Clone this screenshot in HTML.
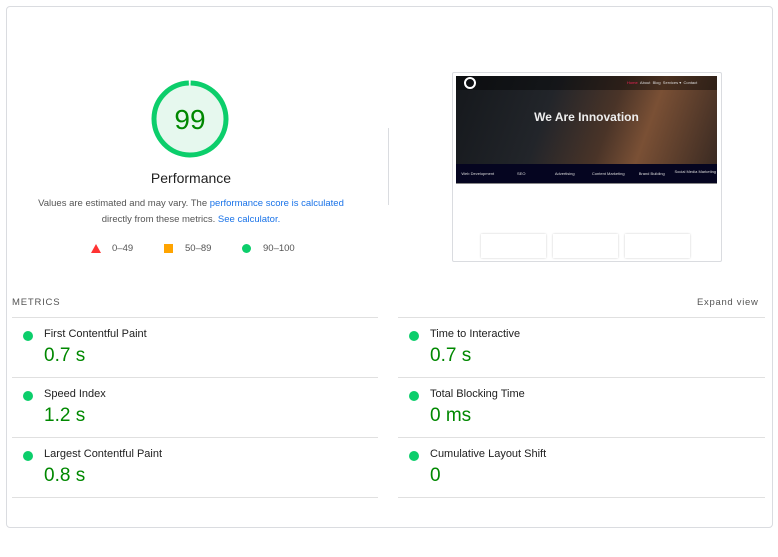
<!DOCTYPE html><html><head><style>
body{margin:0;width:778px;height:504px;background:#fff;font-family:"Liberation Sans",sans-serif;overflow:hidden;position:relative}
.card{position:absolute;left:6px;top:6px;width:765px;height:520px;border:1px solid #dadce0;border-radius:4px}
.a{position:absolute}
.link{color:#1a73e8}
.col{position:absolute;width:366px}
.row{height:59px;border-top:1px solid #e0e0e0;position:relative}
.dot{position:absolute;left:11px;top:13px;width:10px;height:10px;border-radius:50%;background:#0cce6b}
.t{position:absolute;left:32px;top:10px;font-size:11px;color:#212121}
.v{position:absolute;left:32px;top:27px;font-size:19px;color:#008800}
</style></head><body>
<div class="card"></div>
<svg class="a" style="left:149px;top:78px" width="82" height="82"><circle cx="41" cy="41" r="36" fill="#e6f8ee" stroke="#0cce6b" stroke-width="5" stroke-dasharray="224 2.2" transform="rotate(-89 41 41)"/><text x="41" y="51" text-anchor="middle" font-size="28" fill="#008800" font-family="Liberation Sans">99</text></svg>
<div class="a" style="left:0;width:382px;top:170px;text-align:center;font-size:14px;color:#212121">Performance</div>
<div class="a" style="left:0;width:382px;top:196px;text-align:center;font-size:9.5px;color:#555;line-height:16px">Values are estimated and may vary. The <span class="link">performance score is calculated</span><br>directly from these metrics. <span class="link">See calculator.</span></div>
<svg class="a" style="left:91px;top:244px" width="10" height="9"><polygon points="5,0 10,9 0,9" fill="#f33"/></svg>
<div class="a" style="left:112px;top:243px;font-size:9.5px;color:#555">0–49</div>
<div class="a" style="left:164px;top:244px;width:9px;height:9px;background:#ffa400"></div>
<div class="a" style="left:185px;top:243px;font-size:9.5px;color:#555">50–89</div>
<div class="a" style="left:242px;top:244px;width:9px;height:9px;border-radius:50%;background:#0cce6b"></div>
<div class="a" style="left:263px;top:243px;font-size:9.5px;color:#555">90–100</div>
<div class="a" style="left:388px;top:128px;width:1px;height:77px;background:#dadce0"></div>
<div class="a" style="left:452px;top:72px;width:268px;height:188px;border:1px solid #dadce0;border-radius:2px;background:#fff"></div>
<div class="a" style="left:456px;top:76px;width:261px;height:88px;background:linear-gradient(110deg,#15181c 0%,#22252a 35%,#4a3428 58%,#7a5035 72%,#3a2a22 100%)"></div>
<div class="a" style="left:456px;top:76px;width:261px;height:14px;background:rgba(0,0,0,.4)"></div>
<div class="a" style="left:464px;top:77px;width:8px;height:8px;border:2px solid #fff;border-radius:50%"></div>
<div class="a" style="left:627px;top:80px;font-size:4px;color:#ddd"><span style="color:#e25">Home</span> &nbsp;About &nbsp;Blog &nbsp;Services ▾ &nbsp;Contact</div>
<div class="a" style="left:456px;top:110px;width:261px;text-align:center;font-size:12px;font-weight:bold;color:#eee">We Are Innovation</div>
<div class="a" style="left:456px;top:164px;width:261px;height:19px;background:#050520;display:flex;font-size:4px;color:#ddd;border-bottom:1px solid #888">
<div style="flex:1;text-align:center;padding-top:7px">Web Development</div><div style="flex:1;text-align:center;padding-top:7px">SEO</div><div style="flex:1;text-align:center;padding-top:7px">Advertising</div><div style="flex:1;text-align:center;padding-top:7px">Content Marketing</div><div style="flex:1;text-align:center;padding-top:7px">Brand Building</div><div style="flex:1;text-align:center;padding-top:5px">Social Media Marketing</div></div>
<div class="a" style="left:481px;top:234px;width:65px;height:24px;box-shadow:0 0 2px #ccc"></div>
<div class="a" style="left:553px;top:234px;width:65px;height:24px;box-shadow:0 0 2px #ccc"></div>
<div class="a" style="left:625px;top:234px;width:65px;height:24px;box-shadow:0 0 2px #ccc"></div>
<div class="a" style="left:12px;top:297px;font-size:9.5px;color:#555;letter-spacing:.8px">METRICS</div>
<div class="a" style="left:697px;top:297px;font-size:9.5px;color:#555;letter-spacing:.7px">Expand view</div>
<div class="col" style="left:12px;top:317px">
<div class="row"><div class="dot"></div><div class="t">First Contentful Paint</div><div class="v">0.7 s</div></div>
<div class="row"><div class="dot"></div><div class="t">Speed Index</div><div class="v">1.2 s</div></div>
<div class="row"><div class="dot"></div><div class="t">Largest Contentful Paint</div><div class="v">0.8 s</div></div>
<div class="row"></div></div>
<div class="col" style="left:398px;top:317px;width:367px">
<div class="row"><div class="dot"></div><div class="t">Time to Interactive</div><div class="v">0.7 s</div></div>
<div class="row"><div class="dot"></div><div class="t">Total Blocking Time</div><div class="v">0 ms</div></div>
<div class="row"><div class="dot"></div><div class="t">Cumulative Layout Shift</div><div class="v">0</div></div>
<div class="row"></div></div>
</body></html>
